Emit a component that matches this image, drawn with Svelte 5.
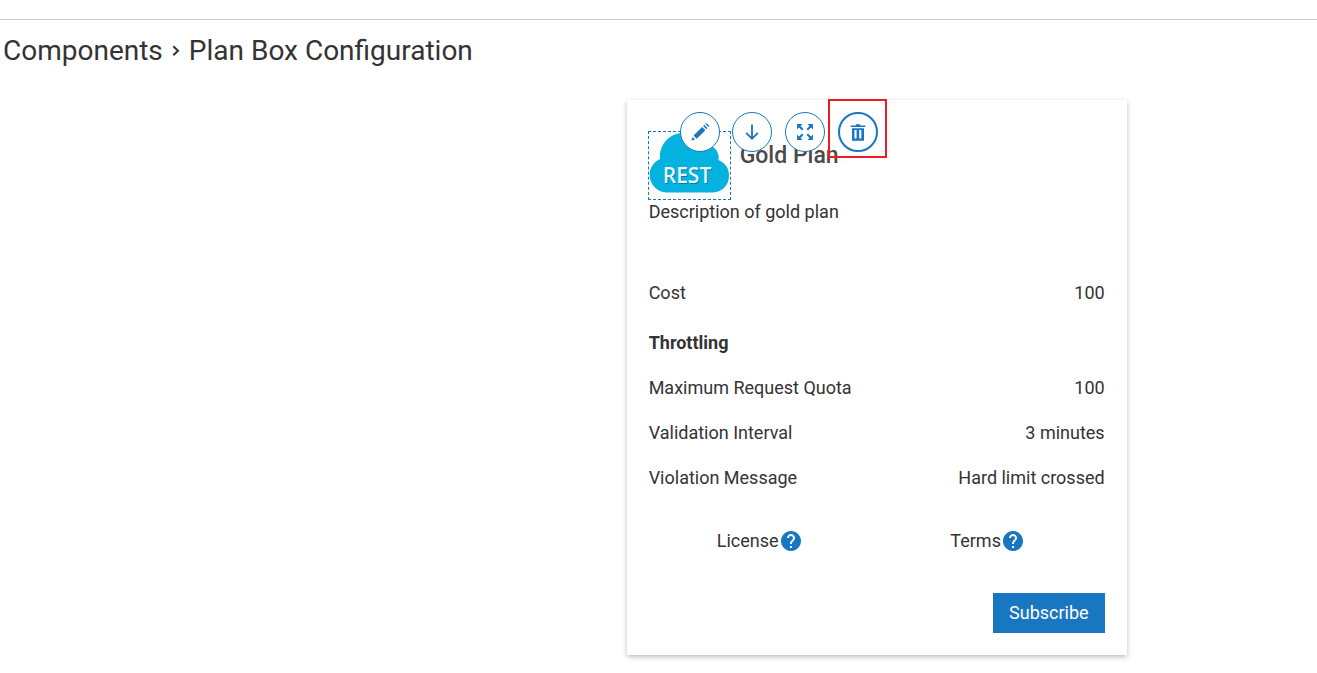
<script>
  const limits = [
    { label: 'Maximum Request Quota', value: '100' },
    { label: 'Validation Interval', value: '3 minutes' },
    { label: 'Violation Message', value: 'Hard limit crossed' }
  ];
  const links = ['License', 'Terms'];
  const tools = [
    {
      label: 'Edit',
      path: 'M1.800 22.200l1.300-4.300 3 3zM4.200 16.300 14.600 5.900l3.900 3.900L8.100 20.200zM15.800 4.700l1.300-1.300 3.900 3.900-1.300 1.300zM18.300 2.200l.8-.6q.6-.5 1.200.1l2.500 2.500q.5.600 0 1.200l-.6.700z'
    },
    {
      label: 'Move down',
      path: 'M10.900 3h2.200v14.500l5.200-5.200 1.500 1.500L12 21.600l-7.800-7.800 1.500-1.500 5.200 5.200z'
    },
    {
      label: 'Resize',
      path: 'M2.500 2.500h6.500L6.700 4.800l3.500 3.600-1.800 1.800-3.600-3.500L2.500 9zM21.500 2.500V9l-2.300-2.300-3.600 3.500-1.800-1.800 3.500-3.600L15 2.500zM2.500 21.500V15l2.300 2.300 3.600-3.500 1.800 1.800-3.500 3.600L9 21.500zM21.500 21.500H15l2.300-2.300-3.500-3.600 1.800-1.800 3.600 3.500 2.300-2.300z'
    },
    {
      label: 'Delete',
      path: 'M3.200 4.200h5.600l1-1.500h4.400l1 1.500h5.600v1.800H3.200zM4.800 7.400h14.400v15H4.800zM7.700 9.700v10.200h2.600V9.700zM13.400 9.700v10.200H16V9.700z'
    }
  ];
</script>

<header class="top"></header>
<main>
  <h1>
    <a href="#components">Components</a>
    <svg class="crumb" viewBox="0 0 8 12" aria-hidden="true"><path d="M1.3 1.3 6 5.8 1.3 10.3" /></svg>
    <span>Plan Box Configuration</span>
  </h1>
  <div class="layout">
    <section class="card">
      <div class="heading">
        <div class="selected">
          <svg viewBox="0 0 81 67" role="img" aria-label="REST">
            <path fill="#04b2e0" d="M18 60.500A17.500 17.500 0 0 1 11 27C10 12 21 1 34 1c10 0 17 4 21 12 9-1 16 6 14.500 15 6.500 3 10.500 8 10.500 15.500 0 10-7 17-17 17z" />
            <text class="shade" x="39" y="52">REST</text>
            <text x="38" y="51">REST</text>
          </svg>
        </div>
        <h2>Gold Plan</h2>
      </div>
      <p>Description of gold plan</p>
      <dl class="cost">
        <div><dt>Cost</dt><dd>100</dd></div>
      </dl>
      <h3>Throttling</h3>
      <dl>
        {#each limits as { label, value }}
          <div><dt>{label}</dt><dd>{value}</dd></div>
        {/each}
      </dl>
      <div class="links">
        {#each links as label}
          <a href={'#' + label.toLowerCase()}>
            {label}
            <svg viewBox="2 2 20 20" aria-hidden="true">
              <path d="M12 2C6.480 2 2 6.480 2 12s4.480 10 10 10 10-4.480 10-10S17.520 2 12 2zm1 17h-2v-2h2v2zm2.070-7.750-.9.920C13.450 12.900 13 13.500 13 15h-2v-.5c0-1.100.45-2.100 1.170-2.830l1.240-1.260c.37-.36.59-.86.59-1.410 0-1.100-.9-2-2-2s-2 .9-2 2H8c0-2.210 1.790-4 4-4s4 1.790 4 4c0 .88-.36 1.680-.93 2.250z" />
            </svg>
          </a>
        {/each}
      </div>
      <button class="subscribe" type="button">Subscribe</button>

      <div class="toolbar" role="toolbar" aria-label="Element actions">
        {#each tools as { label, path }}
          <button type="button" class:active={label === 'Delete'} aria-label={label}>
            <svg viewBox="0 0 24 24" aria-hidden="true"><path fill-rule="evenodd" d={path} /></svg>
          </button>
        {/each}
      </div>
    </section>
  </div>
</main>

<style>
  :global(body) {
    background: #fff;
    color: #333;
    font: 18px/24px Roboto, sans-serif;
  }
  * { box-sizing: border-box; }
  h1, h2, h3, p, dl, dd { margin: 0; }
  a { color: inherit; text-decoration: none; }
  button { font: inherit; cursor: pointer; }
  .top { height: 20px; border-bottom: 1px solid #ccc; }
  h1 {
    display: flex;
    align-items: center;
    gap: 9px;
    padding: 15px 3px 13px;
    font-size: 28px;
    font-weight: 400;
    line-height: 32px;
  }
  .crumb { width: 8px; height: 12px; fill: none; stroke: #333; stroke-width: 2; }
  .layout {
    display: grid;
    grid-template-columns: 1fr 2fr;
    padding: 20px 2px 18px 0;
  }
  .card {
    grid-column: 2;
    justify-self: center;
    position: relative;
    display: flex;
    flex-direction: column;
    width: 100%;
    max-width: 500px;
    padding: 31px 22px 22px;
    background: #fff;
    box-shadow: 0 2px 5px rgba(0, 0, 0, 0.26);
  }
  .heading { display: flex; gap: 9px; margin-left: -1px; }
  .selected { width: 83px; height: 69px; border: 1px dashed #1976c1; }
  .selected svg { display: block; width: 100%; height: 100%; }
  .selected text {
    font: 600 21px "Open Sans", sans-serif;
    text-anchor: middle;
    fill: #e8f6fa;
  }
  .selected .shade { fill: #087d9f; }
  h2 { padding-top: 13px; font-size: 23px; font-weight: 500; line-height: 24px; color: #4a4a4a; }
  .cost { margin-top: 46px; }
  dl div {
    display: flex;
    justify-content: space-between;
    align-items: center;
    min-height: 45px;
  }
  h3 { margin: 16px 0 10px; font-size: 18px; font-weight: 700; line-height: 24px; }
  .links {
    display: grid;
    grid-template-columns: 1fr 1fr;
    justify-items: center;
    margin-top: 29px;
  }
  .links a { display: flex; align-items: center; gap: 2px; padding-right: 8px; }
  .links svg { width: 20px; height: 20px; fill: #1976c1; }
  .subscribe {
    align-self: flex-end;
    margin-top: 40px;
    height: 40px;
    padding: 0 16px;
    border: 0;
    background: #1976c1;
    color: #fff;
  }
  .toolbar {
    position: absolute;
    top: 12px;
    left: 53px;
    display: flex;
    justify-content: space-between;
    width: 198px;
  }
  .toolbar button {
    position: relative;
    display: grid;
    place-items: center;
    width: 40px;
    height: 40px;
    padding: 0;
    border: 1px solid #1976c1;
    border-radius: 50%;
    background: #fff;
  }
  .toolbar svg { width: 20px; height: 20px; fill: #1976c1; }
  .toolbar .active { border-width: 2px; }
  .active::after {
    content: "";
    position: absolute;
    inset: -15px -11px -8px -12px;
    border: 2px solid #ec1c24;
  }
</style>
